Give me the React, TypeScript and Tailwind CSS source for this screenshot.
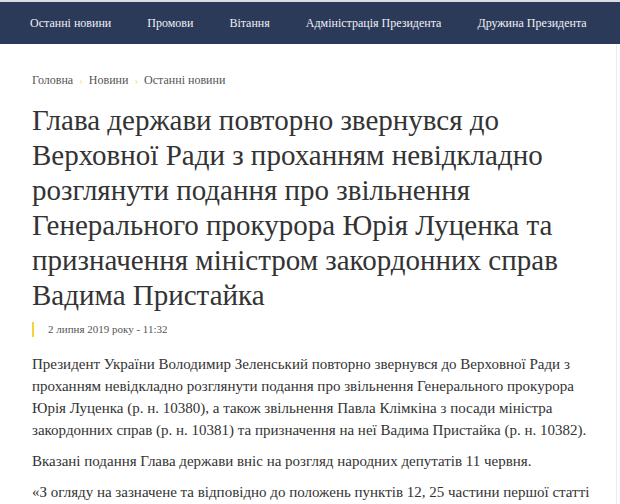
const navItems = [
  'Останні новини',
  'Промови',
  'Вітання',
  'Адміністрація Президента',
  'Дружина Президента',
  'Президент',
];

const crumbs = ['Головна', 'Новини', 'Останні новини'];

export default function App() {
  return (
    <div className="w-[620px] h-[504px] overflow-hidden bg-white font-['Liberation_Serif']">
      {/* Top menu */}
      <div className="border-t-2 border-[#d9dce2]">
        <nav className="h-[42px] bg-[#2c3a5a] flex items-center gap-9 pl-[30px] overflow-hidden whitespace-nowrap">
          {navItems.map((item) => (
            <span key={item} className="font-['Liberation_Serif'] text-[12px] text-[#eef0f4] shrink-0">
              {item}
            </span>
          ))}
        </nav>
      </div>

      <div className="flex">
        <main className="w-[617px] border-r border-[#ececec] pl-[32px] pr-[26px] h-[460px] overflow-hidden">
          {/* Breadcrumbs */}
          <div className="font-['Liberation_Serif'] flex items-center gap-[6px] mt-[27px] text-[12px] text-[#555]">
            {crumbs.map((c, i) => (
              <span key={c} className="flex items-center gap-[6px]">
                {i > 0 && <span className="text-[#f3dc8a] text-[11px]">›</span>}
                {c}
              </span>
            ))}
          </div>

          {/* Title */}
          <h1 className="font-['Liberation_Serif'] mt-[14px] text-[29px] leading-[35px] text-[#333] font-normal">
            Глава держави повторно звернувся до Верховної Ради з проханням невідкладно розглянути
            подання про звільнення Генерального прокурора Юрія Луценка та призначення міністром
            закордонних справ Вадима Пристайка
          </h1>

          {/* Date */}
          <div className="font-['Liberation_Serif'] mt-[8px] flex items-center gap-[14px]">
            <span className="w-[2px] h-[15px] bg-[#f5d33a]" />
            <span className="text-[11px] text-[#555]">2 липня 2019 року - 11:32</span>
          </div>

          {/* Body */}
          <div className="font-['Liberation_Serif'] mt-[15px] text-[15px] leading-[22px] text-[#333] flex flex-col gap-[9px]">
            <p>
              Президент України Володимир Зеленський повторно звернувся до Верховної Ради з
              проханням невідкладно розглянути подання про звільнення Генерального прокурора Юрія
              Луценка (р. н. 10380), а також звільнення Павла Клімкіна з посади міністра
              закордонних справ (р. н. 10381) та призначення на неї Вадима Пристайка (р. н. 10382).
            </p>
            <p>Вказані подання Глава держави вніс на розгляд народних депутатів 11 червня.</p>
            <p>
              «З огляду на зазначене та відповідно до положень пунктів 12, 25 частини першої статті
              85, пунктів 10, 11 частини першої статті 106 Конституції України прошу невідкладно
              розглянути зазначені подання»
            </p>
          </div>
        </main>
      </div>
    </div>
  );
}
